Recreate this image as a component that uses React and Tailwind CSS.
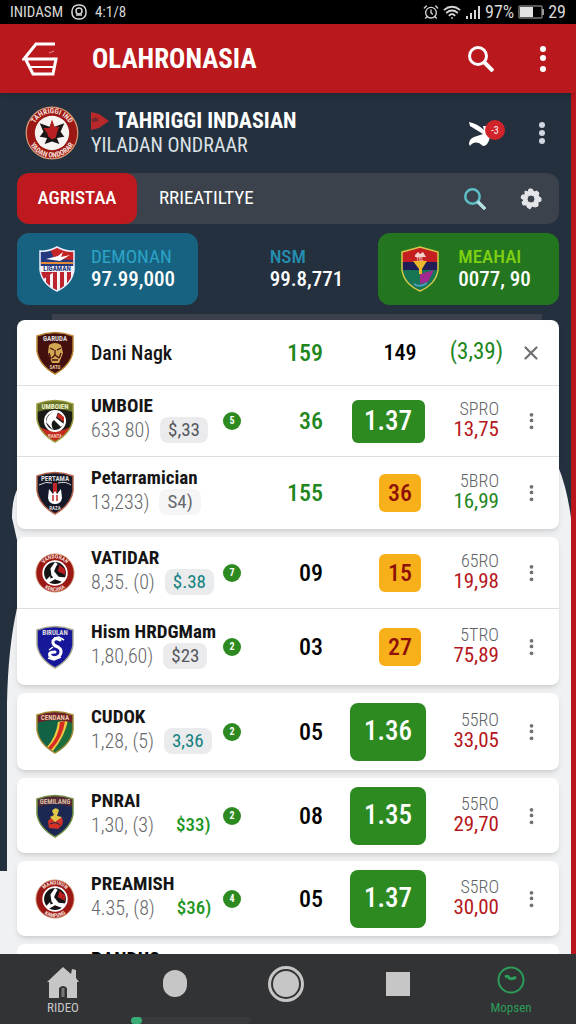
import React from 'react';
import { AlarmClock, Wifi, X } from 'lucide-react';

const SHIELD = 'M2 5 Q20 -2 38 5 V20 Q36 34 20 43 Q4 34 2 20 Z';

const ShieldCrest = ({ fill, edge, label, labelFill = '#ddd', band, children }) => (
    <svg viewBox="0 0 40 44" className="w-10 h-11" aria-hidden="true">
        <path d={SHIELD} fill={fill} />
        {children}
        {band && <path d="M2 5 Q20 -2 38 5 V13 Q20 7 2 13 Z" fill={band} />}
        <path d={SHIELD} fill="none" stroke={edge} strokeWidth="1.5" />
        <text x="20" y="10" textAnchor="middle" fontSize="7" fontWeight="700" fill={labelFill}>{label}</text>
    </svg>
);

const RoundCrest = ({ id, top, bottom, className, children }) => (
    <svg viewBox="0 0 44 44" className={className} aria-hidden="true">
        <defs>
            <path id={`${id}-top`} d="M6 22 A16 16 0 0 1 38 22" />
            <path id={`${id}-bottom`} d="M2 22 A20 20 0 0 0 42 22" />
        </defs>
        <circle cx="22" cy="22" r="21" fill="#9c1815" stroke="#d39a78" strokeWidth="1" />
        <text fontSize="6" fontWeight="700" fill="#f5dfd4" textAnchor="middle">
            <textPath href={`#${id}-top`} startOffset="50%">{top}</textPath>
        </text>
        <text fontSize="6" fontWeight="700" fill="#f5dfd4" textAnchor="middle">
            <textPath href={`#${id}-bottom`} startOffset="50%">{bottom}</textPath>
        </text>
        {children}
    </svg>
);

const Kicker = () => (
    <g>
        <circle cx="22" cy="22" r="13" fill="#151313" stroke="#fff" strokeWidth="2" />
        <path d="M22 10 L25 12 L23 15 L21 20 L26 26 L34 27 L30 32 L22 29 L15 33 L12 30 L18 24 L17 17 Z" fill="#fff" />
        <path d="M27 13 L33 18 L33 24 L25 20 Z" fill="#b91c1c" />
        <path d="M16 22 L20 27 L17 28 Z" fill="#151313" />
    </g>
);

const crests = {
    lion: (
        <ShieldCrest fill="#43100f" edge="#b98535" label="GARUDA">
            <path d="M14 14 Q20 10 26 14 L28 22 L24 32 L17 32 L13 22 Z" fill="#d1a851" />
            <path d="M15 17 L19 19 M26 17 L22 19 M20 19 V24 L17 27 M20 24 L24 27 M17 29 H23 M14 22 L16 28 M26 22 L24 27" stroke="#43100f" strokeWidth="1.3" fill="none" />
            <text x="20" y="38" textAnchor="middle" fontSize="5" fontWeight="700" fill="#e5c9a0">SATU</text>
        </ShieldCrest>
    ),
    umboie: (
        <ShieldCrest fill="#1a1a17" edge="#9a9c3a" label="UMBOIEN" labelFill="#eef0c8" band="#657326">
            <path d="M5 28 Q20 36 35 28 Q30 38 20 43 Q9 37 5 28 Z" fill="#c32a20" />
            <circle cx="20" cy="22" r="10" fill="#181818" stroke="#fff" strokeWidth="2" />
            <path d="M20 12 Q12 15 11 23 L18 31 Q15 23 19 21 L26 28 L29 25 L21 19 L23 13 Z" fill="#fff" />
            <path d="M23 14 L29 18 L29 23 L22 18 Z" fill="#c32a20" />
            <text x="20" y="39" textAnchor="middle" fontSize="5" fontWeight="700" fill="#f3c4ad">BANTA</text>
        </ShieldCrest>
    ),
    flame: (
        <ShieldCrest fill="#141828" edge="#b4634a" label="PERTAMA">
            <path d="M4 14 Q11 10 17 12 M23 12 Q31 10 36 14" stroke="#ddd" strokeWidth="1" fill="none" />
            <path d="M18 12 L22 12 L22 22 L18 22 Z" fill="#c42824" />
            <path d="M14 18 L18 23 L20 20 L22 23 L26 18 L27 27 Q26 33 20 33 Q14 33 13 27 Z" fill="#fff" />
            <path d="M18 24 V30 M22 24 V30" stroke="#c42824" strokeWidth="1.5" />
            <text x="20" y="39" textAnchor="middle" fontSize="5" fontWeight="700" fill="#ddd">RAZA</text>
        </ShieldCrest>
    ),
    snake: (
        <ShieldCrest fill="#17179a" edge="#a8a992" label="BIRULAN">
            <path d="M25 15 Q20 12 18 16 Q17 20 23 22 Q28 25 25 30 Q20 35 15 31 Q13 27 20 27" fill="none" stroke="#fff" strokeWidth="3" strokeLinecap="round" />
            <path d="M19 13 L24 12 L29 15 M14 25 L18 22 M13 33 L19 35 L26 32" fill="none" stroke="#fff" strokeWidth="1.5" />
        </ShieldCrest>
    ),
    stripes: (
        <ShieldCrest fill="#126346" edge="#a28b35" label="CENDANA" labelFill="#e9c5a5" band="#6c2029">
            <path d="M26 10 L37 10 L37 21 Q34 35 21 42 L13 37 Z" fill="#1c6f3c" />
            <path d="M23 12 L33 10 Q30 26 18 41 L12 37 Q21 27 23 12 Z" fill="#efc944" />
            <path d="M25 12 L30 11 Q28 27 16 40 L13 38 Q24 27 25 12 Z" fill="#d42d23" />
        </ShieldCrest>
    ),
    rooster: (
        <ShieldCrest fill="#1c2852" edge="#709044" label="GEMILANG" labelFill="#d3b9a5" band="#532a32">
            <path d="M13 27 Q19 20 27 24 Q30 30 23 35 L14 34 Z" fill="#d33125" />
            <path d="M17 17 Q20 12 24 16 L22 22 L27 23 L20 28 L15 23 L19 21 Z" fill="#e2c648" />
            <path d="M15 30 Q21 27 25 31" stroke="#1c2852" strokeWidth="1" fill="none" />
        </ShieldCrest>
    ),
    vatidar: <RoundCrest id="vatidar" top="VANDORAN" bottom="KENCANA" className="w-10 h-11"><Kicker /></RoundCrest>,
    premish: <RoundCrest id="premish" top="MANDIRUN" bottom="KAMPUNG" className="w-10 h-11"><Kicker /></RoundCrest>,
};

const cards = [
    [
        { crest: 'lion', name: 'Dani Nagk', score: '159', scoreUp: true, plain: '149', change: '(3,39)', height: 'h-[66px]' },
        { crest: 'umboie', name: 'UMBOIE', detail: '633 80)', tag: '$,33', tagStyle: 'grey', mark: '5', score: '36', scoreUp: true, odds: '1.37', size: 'wide', code: 'SPRO', amount: '13,75', height: 'h-[71px]' },
        { crest: 'flame', name: 'Petarramician', detail: '13,233)', tag: 'S4)', tagStyle: 'faint', score: '155', scoreUp: true, odds: '36', size: 'amber', code: '5BRO', amount: '16,99', up: true, height: 'h-[72px]' },
    ],
    [
        { crest: 'vatidar', name: 'VATIDAR', detail: '8,35. (0)', tag: '$.38', tagStyle: 'teal', mark: '7', score: '09', odds: '15', size: 'amber', code: '65RO', amount: '19,98', height: 'h-[72px]' },
        { crest: 'snake', name: 'Hism HRDGMam', detail: '1,80,60)', tag: '$23', tagStyle: 'grey', mark: '2', score: '03', odds: '27', size: 'amber', code: '5TRO', amount: '75,89', height: 'h-[76px]' },
    ],
    [{ crest: 'stripes', name: 'CUDOK', detail: '1,28, (5)', tag: '3,36', tagStyle: 'teal', mark: '2', score: '05', odds: '1.36', size: 'tall', code: '55RO', amount: '33,05', height: 'h-[77px]' }],
    [{ crest: 'rooster', name: 'PNRAI', detail: '1,30, (3)', tag: '$33)', tagStyle: 'green', mark: '2', score: '08', odds: '1.35', size: 'tall', code: '55RO', amount: '29,70', height: 'h-[75px]' }],
    [{ crest: 'premish', name: 'PREAMISH', detail: '4.35, (8)', tag: '$36)', tagStyle: 'green', mark: '4', score: '05', odds: '1.37', size: 'tall', code: 'S5RO', amount: '30,00', height: 'h-[75px]' }],
];

const tagStyles = {
    grey: 'bg-[#ebebed] text-[#55585c] px-2',
    faint: 'bg-[#f5f5f6] text-[#66696c] px-2',
    teal: 'bg-[#e9ebed] text-[#16817f] px-2',
    green: 'text-[#219522] pl-3',
};

const oddsStyles = {
    wide: 'w-[73px] h-[43px] bg-[#2d8a20] text-white text-[27px] rounded-md',
    tall: 'w-[76px] h-[58px] bg-[#2d8a20] text-white text-[27px] rounded-lg',
    amber: 'ml-6 w-[42px] h-[38px] bg-[#f7b019] text-[#8e1109] text-2xl rounded-md',
};

const Dots = ({ className }) => (
    <svg viewBox="0 0 8 28" className={className} fill="currentColor" aria-hidden="true">
        <circle cx="4" cy="4" r="3" />
        <circle cx="4" cy="13" r="3" />
        <circle cx="4" cy="24" r="3" />
    </svg>
);

const Magnifier = ({ className, handle = 'currentColor' }) => (
    <svg viewBox="0 0 26 26" className={className} fill="none" stroke="currentColor" aria-hidden="true">
        <circle cx="10" cy="10" r="8.5" strokeWidth="3" />
        <path d="M16 16 L25 25" stroke={handle} strokeWidth="4" />
    </svg>
);

const TeamRow = ({ team }) => (
    <li className={`grid grid-cols-[40px_minmax(0,1fr)_18px_82px_130px_50px_56px] items-center pl-[18px] ${team.height}`}>
        {crests[team.crest]}
        <div className="pl-4 pb-1 whitespace-nowrap">
            <h3 className={team.detail ? 'text-[19px] leading-[22px] font-bold text-[#151515]' : 'pt-1 text-xl font-medium text-[#151515]'}>{team.name}</h3>
            {team.detail && (
                <p className="flex items-center gap-[10px] text-xl leading-6 font-light text-[#66686b]">
                    {team.detail}
                    <span className={`rounded-lg text-[19px] leading-[26px] ${tagStyles[team.tagStyle]} ${team.tagStyle === 'green' ? 'font-medium' : 'font-normal'}`}>{team.tag}</span>
                </p>
            )}
        </div>
        <span className={team.mark ? 'size-[18px] rounded-full bg-[#2d8a20] text-white text-[10px] leading-[18px] font-bold text-center' : ''}>{team.mark}</span>
        <span className={`text-right text-2xl font-medium ${team.scoreUp ? 'text-[#21861b]' : 'text-black'}`}>{team.score}</span>
        {team.odds ? (
            <button className={`justify-self-center font-medium ${oddsStyles[team.size]}`}>{team.odds}</button>
        ) : (
            <span className="pl-6 text-center text-[22px] font-medium text-black">{team.plain}</span>
        )}
        {team.change ? (
            <span className="justify-self-end text-[23px] text-[#21861b]">{team.change}</span>
        ) : (
            <div className="text-right pr-1 pb-1 justify-self-end">
                <p className="text-lg leading-5 font-light text-[#606366]">{team.code}</p>
                <p className={`text-[21px] leading-5 ${team.up ? 'text-[#21861b]' : 'text-[#b5161b]'}`}>{team.amount}</p>
            </div>
        )}
        <button className="justify-self-center p-1 text-[#707276]" aria-label={team.change ? 'Close' : 'More'}>
            {team.change ? <X className="size-[22px]" strokeWidth={2.5} /> : <Dots className="w-[5px] h-[18px]" />}
        </button>
    </li>
);

const StatusBar = () => (
    <div className="flex items-center justify-between h-6 px-[10px] bg-black text-[#d7d7d7] text-[15px]">
        <div className="flex items-center gap-2">
            <span>INIDASM</span>
            <svg viewBox="0 0 16 16" className="size-4" fill="none" stroke="currentColor" strokeWidth="1.5" aria-hidden="true">
                <rect x="1" y="1" width="14" height="14" rx="6" />
                <circle cx="8" cy="7" r="3" />
                <path d="M5 11 H11" />
            </svg>
            <span>4:1/8</span>
        </div>
        <div className="flex items-center gap-1">
            <AlarmClock className="size-4" />
            <Wifi className="size-[18px]" strokeWidth={2.5} />
            <svg viewBox="0 0 16 14" className="w-4 h-[14px]" stroke="currentColor" strokeWidth="2" aria-hidden="true">
                <path d="M2 14 V11 M6 14 V8 M10 14 V5 M14 14 V1" />
            </svg>
            <span className="text-lg">97%</span>
            <svg viewBox="0 0 26 14" className="w-[26px] h-[14px]" aria-hidden="true">
                <rect x="1" y="1" width="23" height="12" rx="1" fill="none" stroke="#777" strokeWidth="1.5" />
                <rect x="2" y="2" width="13" height="10" fill="#e2e2e2" />
                <path d="M25 4 V10" stroke="#999" strokeWidth="2" />
            </svg>
            <span className="text-lg">29</span>
        </div>
    </div>
);

const Header = () => (
    <header className="relative z-10 flex items-center h-[69px] pl-[22px] pr-[29px] bg-[#b9181c] text-white shadow-md">
        <button aria-label="Back">
            <svg viewBox="0 0 36 34" className="w-9 h-[34px]" fill="none" stroke="currentColor" strokeWidth="3" aria-hidden="true">
                <path d="M33 2 H14 L2 17 H34 L31 32 H11 L4 18" />
                <path d="M8 25 H31" strokeWidth="2" />
                <path d="M27 11 L32 9" strokeWidth="1" opacity="0.5" />
            </svg>
        </button>
        <h1 className="flex-1 pl-[34px] text-[27px] leading-9 font-bold">OLAHRONASIA</h1>
        <button aria-label="Search" className="mr-[45px]">
            <Magnifier className="size-[26px]" />
        </button>
        <button aria-label="More">
            <Dots className="w-2 h-7" />
        </button>
    </header>
);

const TeamHeader = () => (
    <div className="flex items-center h-20 pl-2 pr-[13px]">
        <RoundCrest id="indasian" top="TAHRIGGI IND" bottom="YADAN ONDORAR" className="size-[54px]">
            <circle cx="22" cy="22" r="18" fill="none" stroke="#e9d9d2" strokeWidth="0" />
            <circle cx="22" cy="22" r="14" fill="#f7f3f0" />
            <path d="M22 12 L24 17 L32 14 L29 21 L32 25 L26 26 L28 31 L22 29 L16 31 L18 26 L12 25 L15 21 L12 14 L20 17 Z" fill="#1b1717" />
            <path d="M22 11 L24 17 L28 17 L26 22 L25 26 L22 27 L19 25 L18 22 L15 18 L20 18 Z" fill="#b62022" />
        </RoundCrest>
        <div className="flex-1 pl-[12px] whitespace-nowrap">
            <h2 className="flex items-center gap-[6px] text-[22px] leading-[25px] font-bold text-white">
                <svg viewBox="0 0 18 18" className="size-[18px]" aria-hidden="true">
                    <path d="M0 0 L8 2 L18 9 L8 16 L0 18 Z" fill="#b9282b" />
                    <path d="M0 8 L5 5 L8 9 L2 10 Z" fill="#6e2830" />
                </svg>
                TAHRIGGI INDASIAN
            </h2>
            <p className="text-xl leading-[25px] text-[#dce1e6]">YILADAN ONDRAAR</p>
        </div>
        <button aria-label="Notifications" className="mr-8">
            <svg viewBox="0 0 38 27" className="w-[38px] h-[27px]" aria-hidden="true">
                <path d="M1 2 Q10 4 16 10 L15 6 L21 6 L22 17 Q20 26 15 26 L11 23 Q5 21 2 26 L1 24 Q1 19 6 17 L15 14 L2 6 Z" fill="#fff" />
                <circle cx="27" cy="10" r="10" fill="#d0242a" />
                <text x="27" y="14" textAnchor="middle" fontSize="10" fill="#fff">-3</text>
            </svg>
        </button>
        <button aria-label="More" className="text-[#cfd6e0]">
            <svg viewBox="0 0 8 24" className="w-2 h-6" fill="currentColor" aria-hidden="true">
                <circle cx="4" cy="4" r="3" />
                <circle cx="4" cy="12" r="3" />
                <circle cx="4" cy="20" r="3" />
            </svg>
        </button>
    </div>
);

const Tabs = () => (
    <div className="flex items-center h-[51px] rounded-xl bg-[#3b424b] text-white text-[19px] font-medium">
        <button className="w-[120px] h-full rounded-xl bg-[#bd191e]">AGRISTAA</button>
        <button className="pl-[22px] font-normal whitespace-nowrap">RRIEATILTYE</button>
        <button className="ml-auto mr-[33px] text-[#5dbec8]" aria-label="Search">
            <Magnifier className="size-[22px]" handle="#b4e2e4" />
        </button>
        <button className="mr-4 text-[#e3e5e8]" aria-label="Settings">
            <svg viewBox="0 0 24 24" className="size-6" fill="currentColor" fillRule="evenodd" stroke="currentColor" strokeLinejoin="round" aria-hidden="true">
                <path d="M10 2 H13 L15 5 L18 4 L20 6 L19 9 L22 11 V14 L19 15 L19 19 L16 20 L13 19 L11 22 L8 20 L8 18 L4 18 L3 15 L5 13 L2 11 L3 8 L6 8 L6 4 L9 5 Z M12 8 A4 4 0 1 0 12 16 A4 4 0 1 0 12 8 Z" />
            </svg>
        </button>
    </div>
);

const Stats = () => (
    <div className="grid grid-cols-3 mt-[9px] h-[72px] text-[21px] leading-6 font-medium text-white whitespace-nowrap">
        <div className="flex items-center pl-[21px] rounded-xl bg-[#176280]">
            <svg viewBox="0 0 38 46" className="w-[38px] h-[46px]" aria-hidden="true">
                <clipPath id="us-shield"><path d="M2 5 Q10 6 19 1 Q28 6 36 5 V24 Q34 38 19 45 Q4 38 2 24 Z" /></clipPath>
                <g clipPath="url(#us-shield)">
                    <rect width="38" height="46" fill="#f1f1f6" />
                    <rect width="38" height="20" fill="#24387f" />
                    <path d="M12 2 L36 2 V14 L16 13 Z" fill="#c52427" />
                    <path d="M8 13 L20 10 L25 6 L23 11 L32 9 L22 15 Z" fill="#fff" />
                    <path d="M3 17 H35" stroke="#e58b35" strokeWidth="2" />
                    <text x="19" y="25" textAnchor="middle" fontSize="7" fontWeight="700" fill="#26387a">LIGAMAN</text>
                    <path d="M2 26 H16 L4 34 Z" fill="#bd2430" />
                    <path d="M10 28 V46 M17 26 V46 M24 26 V46 M31 26 V46" stroke="#bd2430" strokeWidth="4" />
                </g>
                <path d="M2 5 Q10 6 19 1 Q28 6 36 5 V24 Q34 38 19 45 Q4 38 2 24 Z" fill="none" stroke="#eef" strokeWidth="1.5" />
            </svg>
            <div className="pl-[15px]">
                <p className="text-[19px] leading-5 font-normal text-[#2ba4c7]">DEMONAN</p>
                <p>97.99,000</p>
            </div>
        </div>
        <div className="flex flex-col justify-center pl-[72px]">
            <p className="text-[19px] leading-5 text-[#248eb0]">NSM</p>
            <p>99.8,771</p>
        </div>
        <div className="flex items-center pl-[22px] rounded-xl bg-[#23761f]">
            <svg viewBox="0 0 40 46" className="w-10 h-[46px]" aria-hidden="true">
                <clipPath id="me-shield"><path d="M2 6 L20 1 L38 6 V24 Q36 38 20 45 Q4 38 2 24 Z" /></clipPath>
                <g clipPath="url(#me-shield)">
                    <rect width="40" height="46" fill="#167654" />
                    <rect width="40" height="17" fill="#c51f22" />
                    <rect y="16" width="40" height="8" fill="#211d56" />
                    <path d="M20 28 L34 24 L28 36 L20 38 Z" fill="#a02a90" />
                    <path d="M13 15 H27 L22 23 V28 H19 V23 Z" fill="#ebb72b" />
                    <path d="M15 9 L18 6 L20 8 L23 6 L26 11 H15 Z" fill="#f2d3c9" />
                    <text x="20" y="15" textAnchor="middle" fontSize="5" fill="#f2d3c9">TEL</text>
                    <path d="M14 38 Q20 42 27 37" stroke="#4f9cc0" strokeWidth="2" fill="none" />
                </g>
                <path d="M2 6 L20 1 L38 6 V24 Q36 38 20 45 Q4 38 2 24 Z" fill="none" stroke="#d9c94b" strokeWidth="1.5" />
            </svg>
            <div className="pl-[18px]">
                <p className="text-[19px] leading-5 text-[#7fd013]">MEAHAI</p>
                <p>0077, 90</p>
            </div>
        </div>
    </div>
);

const BottomNav = () => (
    <nav className="h-[70px] bg-[#323335] text-[#c6c6c6]">
        <div className="flex items-start justify-between h-[63px] px-[45px] pt-3 text-[13px] leading-3">
            <a href="#home" className="w-9 flex flex-col items-center gap-1">
                <svg viewBox="0 0 32 32" className="size-8" aria-hidden="true">
                    <path d="M16 1 L24 8 L25 3 L29 4 V12 L32 16 H30 V32 H20 V22 Q16 18 12 22 V32 H2 V16 H0 Z" fill="currentColor" />
                    <path d="M16 22 V31" stroke="#777" strokeWidth="3" />
                </svg>
                RIDEO
            </a>
            <a href="#live" aria-label="Live" className="pt-1"><span className="block w-6 h-[27px] rounded-full bg-[#c6c6c6]" /></a>
            <a href="#main" aria-label="Main">
                <span className="flex size-9 items-center justify-center rounded-full border-[3px] border-[#c6c6c6]">
                    <span className="size-[26px] rounded-full bg-[#c6c6c6]" />
                </span>
            </a>
            <a href="#list" aria-label="List" className="pt-[6px]"><span className="block size-6 bg-[#c6c6c6]" /></a>
            <a href="#profile" className="w-10 flex flex-col items-center gap-2 text-[#2c9c58]">
                <svg viewBox="0 0 28 28" className="size-7" fill="none" stroke="currentColor" strokeWidth="2" aria-hidden="true">
                    <circle cx="14" cy="14" r="12.5" />
                    <path d="M8 11 Q11 9 12 12 Q15 14 19 11" strokeWidth="3" />
                </svg>
                Mopsen
            </a>
        </div>
        <div className="ml-[131px] w-[120px] h-[7px] rounded bg-[#38393b]">
            <div className="w-[11px] h-full rounded bg-[#39ad78]" />
        </div>
    </nav>
);

const App = () => (
    <div className="flex flex-col h-screen overflow-hidden bg-[#b9151b] font-['Roboto_Condensed','Liberation_Sans_Narrow',Roboto,sans-serif]">
        <StatusBar />
        <Header />
        <main className="relative flex-1 min-h-0 overflow-hidden mr-[5px] pl-[17px] pr-3 bg-[#f0f1f2]">
            {/* dark backdrop that curves away behind the cards */}
            <svg viewBox="0 0 571 861" preserveAspectRatio="none" className="absolute inset-0 size-full" aria-hidden="true">
                <path d="M0 0 H571 V425 Q567 395 558 373 H18 V395 Q12 405 12 425 L17 447 V515 Q8 555 7 610 V778 H0 Z" fill="#24303e" />
                <path d="M52 221 H542 V240 H52 Z" fill="#3a414c" />
            </svg>
            <div className="relative">
                <TeamHeader />
                <Tabs />
                <Stats />
                <div className="flex flex-col gap-2 mt-[15px]">
                    {cards.map((teams) => (
                        <ul key={teams[0].name} className="rounded-lg bg-white shadow-md divide-y divide-[#dcdfe2]">
                            {teams.map((team) => <TeamRow key={team.name} team={team} />)}
                        </ul>
                    ))}
                    <div className="h-16 pl-[74px] pt-1 rounded-lg bg-white text-xl leading-6 font-bold">BANDUS</div>
                </div>
            </div>
        </main>
        <BottomNav />
    </div>
);

export default App;
